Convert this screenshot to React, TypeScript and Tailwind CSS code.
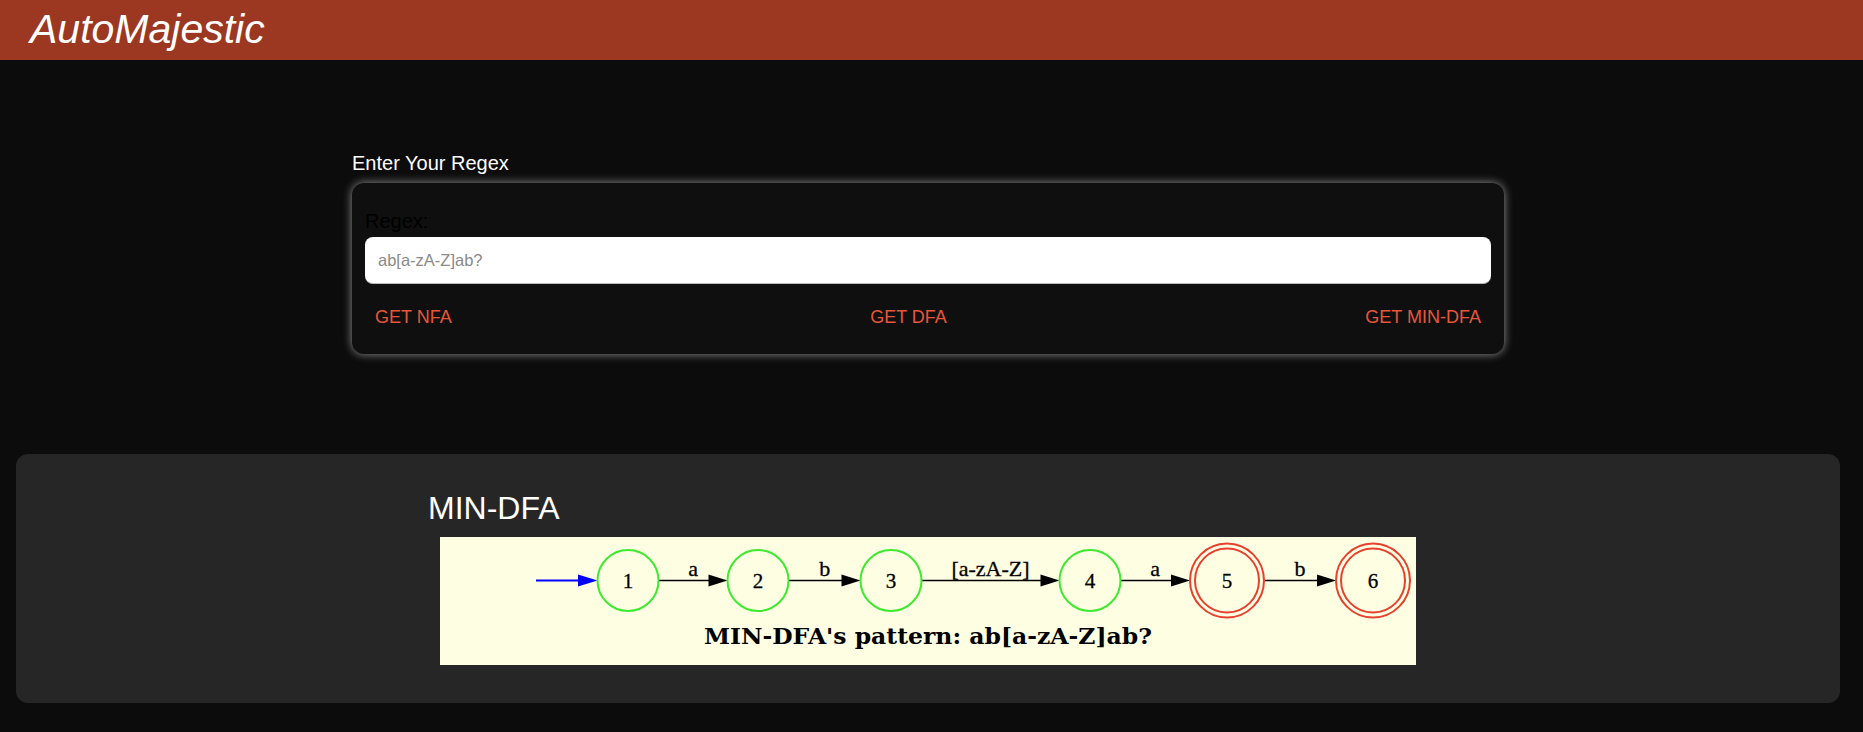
import React from 'react';

const nodes = [
  { id: '1', x: 188, final: false },
  { id: '2', x: 318, final: false },
  { id: '3', x: 451, final: false },
  { id: '4', x: 650, final: false },
  { id: '5', x: 787, final: true },
  { id: '6', x: 933, final: true },
];

const edges = [
  { from: 219, to: 287.5, label: 'a' },
  { from: 349, to: 420.5, label: 'b' },
  { from: 481.5, to: 619.5, label: '[a-zA-Z]' },
  { from: 680.5, to: 750, label: 'a' },
  { from: 824, to: 896, label: 'b' },
];

const CY = 43.5;

const MinDfaGraph: React.FC = () => (
  <svg width="976" height="128" viewBox="0 0 976 128" className="block">
    <rect width="976" height="128" fill="#fefee2" />
    {/* start arrow */}
    <line x1="96" y1={CY} x2="140" y2={CY} stroke="#0000ff" strokeWidth="2" />
    <polygon points={`138,${CY - 6} 157.5,${CY} 138,${CY + 6}`} fill="#0000ff" />

    {edges.map((e, i) => (
      <g key={i}>
        <line x1={e.from} y1={CY} x2={e.to - 18} y2={CY} stroke="#000" strokeWidth="1.6" />
        <polygon points={`${e.to - 19},${CY - 6} ${e.to},${CY} ${e.to - 19},${CY + 6}`} fill="#000" />
        <text
          x={(e.from + e.to) / 2}
          y="39"
          textAnchor="middle"
          fontFamily="'Liberation Serif', serif"
          fontSize="22"
          stroke="#000"
          strokeWidth="0.3"
          fill="#000"
        >
          {e.label}
        </text>
      </g>
    ))}

    {nodes.map((n) => (
      <g key={n.id}>
        {n.final ? (
          <>
            <circle cx={n.x} cy={CY} r="37" fill="none" stroke="#e8402f" strokeWidth="2" />
            <circle cx={n.x} cy={CY} r="32" fill="none" stroke="#e8402f" strokeWidth="2" />
          </>
        ) : (
          <circle cx={n.x} cy={CY} r="30.5" fill="none" stroke="#3dea2f" strokeWidth="2" />
        )}
        <text
          x={n.x}
          y="51"
          textAnchor="middle"
          fontFamily="'Liberation Serif', serif"
          fontSize="21"
          stroke="#000"
          strokeWidth="0.3"
          fill="#000"
        >
          {n.id}
        </text>
      </g>
    ))}

    <text
      x="488"
      y="107"
      textAnchor="middle"
      fontFamily="'DejaVu Serif', serif"
      fontWeight="bold"
      fontSize="22"
      textLength="448"
      lengthAdjust="spacingAndGlyphs"
      fill="#000"
    >
      MIN-DFA's pattern: ab[a-zA-Z]ab?
    </text>
  </svg>
);

export default function App() {
  return (
    <div className="min-h-[732px] bg-[#0c0c0c] font-['Liberation_Sans',Arial,sans-serif]">
      <header className="flex h-[60px] items-center bg-[#9c3822] pl-[30px]">
        <h1 className="text-[41px] leading-[1.15] italic text-white">AutoMajestic</h1>
      </header>

      <main className="w-[1856px]">
        <section className="mx-auto mt-[92px] w-[1152px]">
          <h2 className="text-[20px] leading-[1.15] text-white">Enter Your Regex</h2>
          <div className="mt-2 rounded-xl bg-[#0f0f0f] px-[13px] pt-[27px] pb-5 shadow-[0_0_10px_rgba(255,255,255,0.55)]">
            <label className="block text-[20px] leading-[1.15] text-black">Regex:</label>
            <input
              type="text"
              placeholder="ab[a-zA-Z]ab?"
              className="mt-1 block h-[47px] w-full rounded-lg border-b border-[#bbbbbb] bg-white px-[13px] text-[16.5px] text-black outline-none placeholder:text-[#8a8a8a]"
            />
            <div className="mt-[17px] flex items-center justify-between">
              <button className="px-[10px] py-[6px] text-[18px] leading-[1.15] text-[#e5573b]">GET NFA</button>
              <button className="px-[10px] py-[6px] text-[18px] leading-[1.15] text-[#e5573b]">GET DFA</button>
              <button className="px-[10px] py-[6px] text-[18px] leading-[1.15] text-[#e5573b]">GET MIN-DFA</button>
            </div>
          </div>
        </section>

        <section className="mx-4 mt-[100px] rounded-xl bg-[#272627] pt-9 pb-[38px]">
          <div className="mx-auto w-[1000px]">
            <h3 className="text-[32px] leading-[1.15] text-white">MIN-DFA</h3>
            <div className="mt-[11px] flex justify-center">
              <MinDfaGraph />
            </div>
          </div>
        </section>
      </main>
    </div>
  );
}
